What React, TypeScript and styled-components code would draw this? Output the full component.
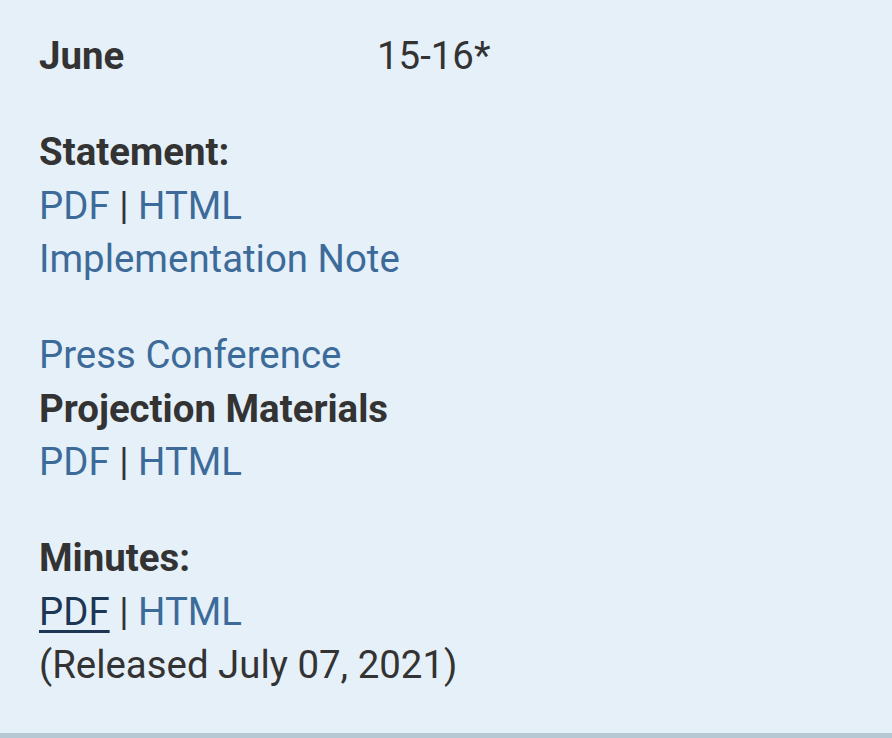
import React from "react";
import styled, { createGlobalStyle } from "styled-components";

const Global = createGlobalStyle`
  html, body { margin: 0; padding: 0; background: #e6f0f9; }
  body { font-family: Roboto, "Liberation Sans", sans-serif; }
`;

const Panel = styled.section`
  box-sizing: border-box;
  height: 738px;
  background: #e6f0f9;
  border-bottom: 5px solid #b6c8d4;
  padding: 29px 40px 0 39px;
  color: #333;
  font-size: 38.4px;
  line-height: 53.5px;
`;

const MeetingRow = styled.div`
  display: grid;
  grid-template-columns: 338px auto;
`;

const Month = styled.div`
  font-weight: 700;
`;

const Dates = styled.div`
  font-weight: 400;
`;

const Block = styled.div`
  margin-top: 42.5px;
`;

const Label = styled.div`
  font-weight: 700;
`;

const Line = styled.div``;

const Link = styled.a<{ $visited?: boolean }>`
  color: ${(p) => (p.$visited ? "#1d3653" : "#3d6b99")};
  text-decoration: ${(p) => (p.$visited ? "underline" : "none")};
  text-decoration-thickness: 3px;
  text-underline-offset: 5px;
`;

const Sep = styled.span`
  color: #333;
`;

const LinkPair = ({ visited }: { visited?: boolean }) => (
  <Line>
    <Link href="#" $visited={visited}>PDF</Link>
    <Sep> | </Sep>
    <Link href="#">HTML</Link>
  </Line>
);

export default function App() {
  return (
    <>
      <Global />
      <Panel>
        <MeetingRow>
          <Month>June</Month>
          <Dates>15-16*</Dates>
        </MeetingRow>
        <Block>
          <Label>Statement:</Label>
          <LinkPair />
          <Line>
            <Link href="#">Implementation Note</Link>
          </Line>
        </Block>
        <Block>
          <Line>
            <Link href="#">Press Conference</Link>
          </Line>
          <Label>Projection Materials</Label>
          <LinkPair />
        </Block>
        <Block>
          <Label>Minutes:</Label>
          <LinkPair visited />
          <Line>(Released July 07, 2021)</Line>
        </Block>
      </Panel>
    </>
  );
}
